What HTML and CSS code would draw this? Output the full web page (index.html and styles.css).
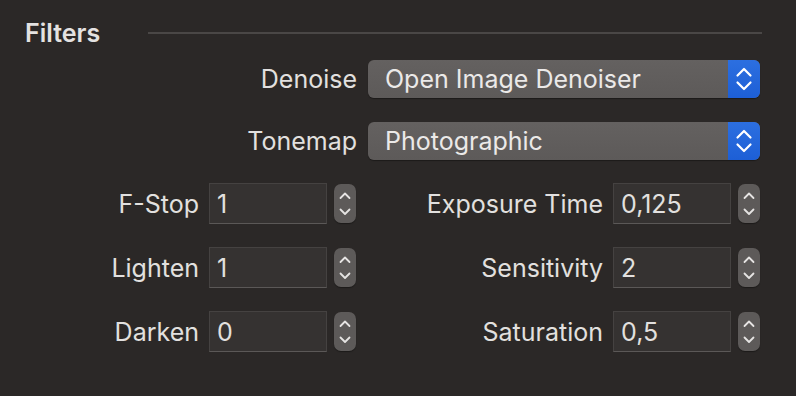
FILE: index.html
```html
<!DOCTYPE html>
<html lang="en">
<head>
    <meta charset="UTF-8">
    <title>Filters</title>
    <link rel="stylesheet" href="styles.css">
</head>
<body>
    <div class="panel">
        <div class="section-head">
            <h2>Filters</h2>
            <div class="rule"></div>
        </div>

        <div class="popup-row">
            <label>Denoise</label>
            <div class="popup">
                <span class="popup-value">Open Image Denoiser</span>
                <span class="popup-arrows">
                    <svg width="32" height="38" viewBox="0 0 32 38"><path d="M9.5 15.5 L16 9 L22.5 15.5 M9.5 22.5 L16 29 L22.5 22.5" fill="none" stroke="#fff" stroke-width="2.2" stroke-linecap="round" stroke-linejoin="round"/></svg>
                </span>
            </div>
        </div>

        <div class="popup-row">
            <label>Tonemap</label>
            <div class="popup">
                <span class="popup-value">Photographic</span>
                <span class="popup-arrows">
                    <svg width="32" height="38" viewBox="0 0 32 38"><path d="M9.5 15.5 L16 9 L22.5 15.5 M9.5 22.5 L16 29 L22.5 22.5" fill="none" stroke="#fff" stroke-width="2.2" stroke-linecap="round" stroke-linejoin="round"/></svg>
                </span>
            </div>
        </div>

        <div class="number-grid">
            <div class="number-row">
                <label>F-Stop</label>
                <div class="field">1</div>
                <div class="stepper"><svg width="22" height="39" viewBox="0 0 22 39"><path d="M6.5 14 L11 9.5 L15.5 14 M6.5 25.5 L11 30 L15.5 25.5" fill="none" stroke="#e6e4e3" stroke-width="1.8" stroke-linecap="round" stroke-linejoin="round"/></svg></div>
            </div>
            <div class="number-row">
                <label>Exposure Time</label>
                <div class="field">0,125</div>
                <div class="stepper"><svg width="22" height="39" viewBox="0 0 22 39"><path d="M6.5 14 L11 9.5 L15.5 14 M6.5 25.5 L11 30 L15.5 25.5" fill="none" stroke="#e6e4e3" stroke-width="1.8" stroke-linecap="round" stroke-linejoin="round"/></svg></div>
            </div>
            <div class="number-row">
                <label>Lighten</label>
                <div class="field">1</div>
                <div class="stepper"><svg width="22" height="39" viewBox="0 0 22 39"><path d="M6.5 14 L11 9.5 L15.5 14 M6.5 25.5 L11 30 L15.5 25.5" fill="none" stroke="#e6e4e3" stroke-width="1.8" stroke-linecap="round" stroke-linejoin="round"/></svg></div>
            </div>
            <div class="number-row">
                <label>Sensitivity</label>
                <div class="field">2</div>
                <div class="stepper"><svg width="22" height="39" viewBox="0 0 22 39"><path d="M6.5 14 L11 9.5 L15.5 14 M6.5 25.5 L11 30 L15.5 25.5" fill="none" stroke="#e6e4e3" stroke-width="1.8" stroke-linecap="round" stroke-linejoin="round"/></svg></div>
            </div>
            <div class="number-row">
                <label>Darken</label>
                <div class="field">0</div>
                <div class="stepper"><svg width="22" height="39" viewBox="0 0 22 39"><path d="M6.5 14 L11 9.5 L15.5 14 M6.5 25.5 L11 30 L15.5 25.5" fill="none" stroke="#e6e4e3" stroke-width="1.8" stroke-linecap="round" stroke-linejoin="round"/></svg></div>
            </div>
            <div class="number-row">
                <label>Saturation</label>
                <div class="field">0,5</div>
                <div class="stepper"><svg width="22" height="39" viewBox="0 0 22 39"><path d="M6.5 14 L11 9.5 L15.5 14 M6.5 25.5 L11 30 L15.5 25.5" fill="none" stroke="#e6e4e3" stroke-width="1.8" stroke-linecap="round" stroke-linejoin="round"/></svg></div>
            </div>
        </div>
    </div>
</body>
</html>
```

FILE: styles.css
```css
body {
    margin: 0;
    background-color: #2b2827;
    font-family: Inter, "Noto Sans", sans-serif;
    color: #e2e0df;
}
.panel {
    width: 796px;
    height: 396px;
    box-sizing: border-box;
    padding: 18px 36px 0 25px;
}
.section-head {
    display: flex;
    align-items: center;
    height: 30px;
}
h2 {
    margin: 0;
    font-size: 25px;
    font-weight: 600;
    color: #e4e2e1;
}
.rule {
    flex: 1;
    height: 2px;
    margin: 0 -2px 0 48px;
    background-color: #4a4746;
}
.popup-row {
    display: flex;
    justify-content: flex-end;
    align-items: center;
    margin-top: 12px;
}
.popup-row + .popup-row {
    margin-top: 24px;
}
label {
    font-size: 25px;
    margin-right: 11px;
}
.popup {
    display: flex;
    width: 392px;
    height: 38px;
    border-radius: 6px;
    overflow: hidden;
    background: linear-gradient(#646160, #5d5a59);
    box-shadow: 0 1px 1px rgba(0, 0, 0, 0.35);
}
.popup-value {
    flex: 1;
    padding-left: 17px;
    font-size: 25px;
    line-height: 38px;
    color: #ebe9e8;
}
.popup-arrows {
    display: flex;
    width: 32px;
    background: linear-gradient(#2c6fe0, #1d5fd6);
}
.number-grid {
    display: grid;
    grid-template-columns: 331px 1fr;
    row-gap: 23px;
    margin-top: 23px;
}
.number-row {
    display: flex;
    justify-content: flex-end;
    align-items: center;
}
.number-row label {
    margin-right: 10px;
}
.field {
    width: 118px;
    height: 41px;
    box-sizing: border-box;
    padding: 0 7px;
    font-size: 25px;
    line-height: 40px;
    background-color: #353231;
    border: 1px solid #454241;
    border-bottom-color: #5b5857;
}
.stepper {
    display: flex;
    width: 22px;
    height: 39px;
    margin-left: 7px;
    border-radius: 7px;
    background-color: #5d5a59;
    box-shadow: 0 1px 1px rgba(0, 0, 0, 0.35);
}
```
